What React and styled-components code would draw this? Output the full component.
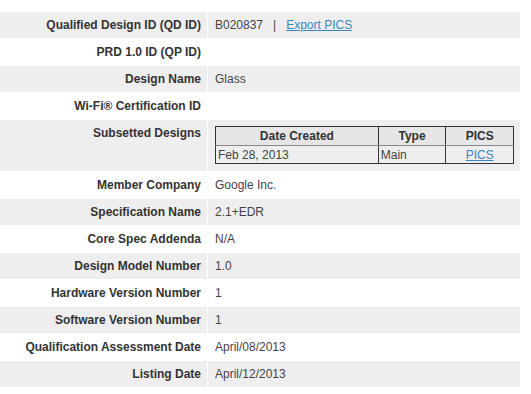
import React from "react";
import styled, { createGlobalStyle } from "styled-components";

const Global = createGlobalStyle`
  html, body { margin: 0; padding: 0; background: #fff; }
  body { font-family: "Liberation Sans", Arial, sans-serif; font-size: 12px; }
`;

const Page = styled.div`
  padding-top: 12px;
  width: 520px;
  display: flex;
  flex-direction: column;
  gap: 1px;
`;

const Row = styled.div`
  display: grid;
  grid-template-columns: 207px 1fr;
  column-gap: 1px;
  min-height: ${(p) => p.$h || 26}px;
`;

const Label = styled.div`
  background: ${(p) => (p.$shade ? "#eeeeee" : "#ffffff")};
  color: #333;
  font-weight: bold;
  text-align: right;
  padding: 6px 6px 0 0;
  line-height: 14px;
  box-sizing: border-box;
`;

const Value = styled.div`
  background: ${(p) => (p.$shade ? "#eeeeee" : "#ffffff")};
  color: #444;
  padding: 6px 6px 0 7px;
  line-height: 14px;
  box-sizing: border-box;
`;

const Sep = styled.span`
  margin: 0 10px;
`;

const Link = styled.a`
  color: #3a87bf;
  text-decoration: underline;
  cursor: pointer;
`;

const SubTable = styled.table`
  width: 100%;
  border-collapse: collapse;
  border: 1px solid #333;
  margin-top: 0;
  font-size: 12px;
`;

const Th = styled.th`
  background: #e6e6e6;
  color: #333;
  font-weight: bold;
  text-align: center;
  height: 18px;
  padding: 0;
  border-left: 1px solid #333;
  border-bottom: 1px solid #888;
  width: ${(p) => p.$w}px;
  &:first-child { border-left: none; }
`;

const Td = styled.td`
  color: #444;
  text-align: ${(p) => (p.$center ? "center" : "left")};
  height: 17px;
  padding: 0 2px;
  border-left: 1px solid #333;
  &:first-child { border-left: none; }
`;

const rows = [
  ["Qualified Design ID (QD ID)", "qd"],
  ["PRD 1.0 ID (QP ID)", ""],
  ["Design Name", "Glass"],
  ["Wi-Fi® Certification ID", ""],
  ["Subsetted Designs", "sub"],
  ["Member Company", "Google Inc."],
  ["Specification Name", "2.1+EDR"],
  ["Core Spec Addenda", "N/A"],
  ["Design Model Number", "1.0"],
  ["Hardware Version Number", "1"],
  ["Software Version Number", "1"],
  ["Qualification Assessment Date", "April/08/2013"],
  ["Listing Date", "April/12/2013"],
];

function renderValue(v) {
  if (v === "qd")
    return (
      <>
        B020837<Sep>|</Sep>
        <Link>Export PICS</Link>
      </>
    );
  if (v === "sub")
    return (
      <SubTable>
        <thead>
          <tr>
            <Th $w={163}>Date Created</Th>
            <Th $w={67}>Type</Th>
            <Th $w={67}>PICS</Th>
          </tr>
        </thead>
        <tbody>
          <tr>
            <Td>Feb 28, 2013</Td>
            <Td>Main</Td>
            <Td $center>
              <Link>PICS</Link>
            </Td>
          </tr>
        </tbody>
      </SubTable>
    );
  return v;
}

export default function App() {
  return (
    <>
      <Global />
      <Page>
        {rows.map(([label, value], i) => {
          const shade = i % 2 === 0;
          return (
            <Row key={label} $h={value === "sub" ? 51 : 26}>
              <Label $shade={shade}>{label}</Label>
              <Value $shade={shade}>{renderValue(value)}</Value>
            </Row>
          );
        })}
      </Page>
    </>
  );
}
